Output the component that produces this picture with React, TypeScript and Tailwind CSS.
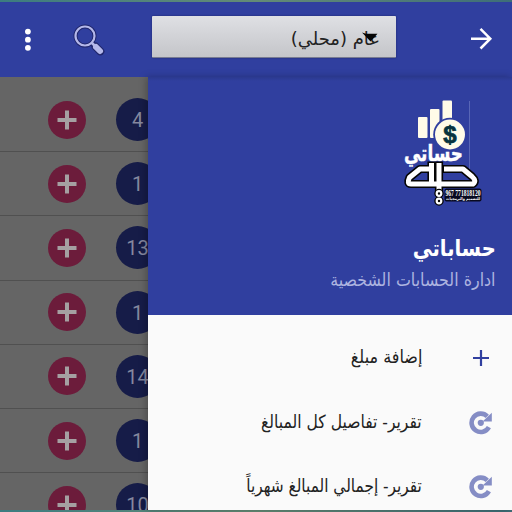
import React from "react";

const counts = ["4", "1", "13", "1", "14", "1", "10"];

const arabic = "font-['DejaVu_Sans',sans-serif]";

function SearchIcon() {
  return (
    <svg width="34" height="34" viewBox="0 0 34 34" fill="none">
      <g stroke="#20266b" strokeLinecap="round">
        <circle cx="13" cy="14" r="9.500" strokeWidth="4" />
        <path d="M20 21l2.500 2.500" strokeWidth="4.500" />
        <path d="M23.500 24.500l4.800 4.800" strokeWidth="8" />
      </g>
      <g stroke="#b4b8ea" strokeLinecap="round">
        <circle cx="13" cy="14" r="9.500" strokeWidth="2.200" />
        <path d="M20 21l2.500 2.500" strokeWidth="2.600" />
        <path d="M24 25l4 4" strokeWidth="6" />
      </g>
    </svg>
  );
}

function Header() {
  return (
    <header className="flex h-[75px] shrink-0 items-start bg-[#303f9f]">
      <svg className="ml-[24px] mt-[25px]" width="8" height="26" viewBox="0 0 8 26" fill="#fff">
        <circle cx="3.900" cy="4.600" r="2.900" />
        <circle cx="3.900" cy="12.700" r="2.900" />
        <circle cx="3.900" cy="20.800" r="2.900" />
      </svg>
      <div className="ml-[40px] mt-[20px]">
        <SearchIcon />
      </div>
      <div className="relative ml-[46px] mt-[14px] h-[42px] w-[244px] rounded-[1px] border-b border-[#777b91] bg-linear-to-b from-[#dfe0e4] to-[#c4c5c9] shadow-[0_0_2px_#1b2464]">
        <span
          dir="rtl"
          className={`absolute right-[16px] top-[9px] origin-right whitespace-nowrap text-[18px] leading-[28px] text-[#222] ${arabic}`}
        >
          عام (محلي)
        </span>
        <svg className="absolute left-[209px] top-[16px]" width="18" height="12" viewBox="0 0 18 12">
          <path d="M1 0.500l4 1.200h11.500L9.500 9.500z" fill="#050505" />
        </svg>
      </div>
      <svg className="ml-[74px] mt-[25px]" width="24" height="24" viewBox="0 0 24 24" fill="none" stroke="#fff" strokeWidth="2.500">
        <path d="M1 11.700h19M10.500 1.800L20.300 11.700 10.500 21.500" />
      </svg>
    </header>
  );
}

function AccountList() {
  return (
    <section className="h-full w-[148px] shrink-0 overflow-hidden bg-[#656565] pt-[11px]">
      {counts.map((count, i) => (
        <div key={i} className="flex h-[64.200px] w-[170px] items-center border-b border-[#505050] pl-[48px]">
          <div className="flex size-[38px] items-center justify-center rounded-full bg-[#6c1c3b]">
            <svg width="20" height="20" viewBox="0 0 20 20" stroke="#a5a0a2" strokeWidth="4">
              <path d="M0.500 10h19M10 0.500v19" />
            </svg>
          </div>
          <div className="ml-[30px] flex size-[43px] shrink-0 items-center justify-center rounded-full bg-[#161c48] pt-px font-[Roboto,sans-serif] text-[20px] text-[#85889f]">
            {count}
          </div>
        </div>
      ))}
    </section>
  );
}

const strokes =
  "M37 79H30L19.500 87.500Q16.500 94 21 94H83Q87 91 82 86.500L73 79H56.500M41.500 75.500v17M49 75.500v22";

function Logo() {
  return (
    <svg width="100" height="120" viewBox="0 0 100 120" direction="ltr">
      <path d="M79.500 11v68" stroke="#5866b6" strokeWidth="1" />
      <g fill="#fffbe8">
        <rect x="28" y="27" width="9.500" height="21" rx="1" />
        <rect x="40" y="19" width="9.500" height="29" rx="1" />
        <rect x="52.500" y="10.500" width="9.500" height="25" rx="1" />
      </g>
      <circle cx="60" cy="44.500" r="16.800" fill="#303f9f" />
      <circle cx="60" cy="44.500" r="15" fill="#fffbe8" />
      <text x="60" y="53" textAnchor="middle" fontFamily="Liberation Sans, sans-serif" fontWeight="700" fontSize="24" fill="#06333f" stroke="#06333f" strokeWidth=".7">$</text>
      <text x="43.500" y="70.500" textAnchor="middle" direction="rtl" textLength="59" lengthAdjust="spacingAndGlyphs" fontFamily="DejaVu Sans, sans-serif" fontWeight="700" fontSize="23" fill="#fff" stroke="#fff" strokeWidth=".4">حساتي</text>
      <g fill="none" strokeLinejoin="round" strokeLinecap="square">
        <path d={strokes} stroke="#050505" strokeWidth="8.200" />
        <path d={strokes} stroke="#fff" strokeWidth="5" />
      </g>
      <g fill="#050505" stroke="#050505" strokeWidth="6.500">
        <circle cx="49" cy="103.500" r="1.500" />
        <circle cx="49" cy="111" r="1.500" />
      </g>
      <g fill="#050505" stroke="#fff" strokeWidth="2.200">
        <circle cx="49" cy="103.500" r="2.300" />
        <circle cx="49" cy="111" r="2.300" />
      </g>
      <rect x="54.500" y="98.500" width="37" height="13" rx="2" fill="#080a20" />
      <text x="55.500" y="105.500" textLength="35" lengthAdjust="spacingAndGlyphs" fontFamily="Liberation Serif, serif" fontWeight="700" fontSize="8" fill="#fff">967 771818120</text>
      <text x="90" y="110" direction="rtl" textLength="34" lengthAdjust="spacingAndGlyphs" fontFamily="DejaVu Sans, sans-serif" fontWeight="700" fontSize="4" fill="#fff">للتصميم والبرمجيات</text>
    </svg>
  );
}

function ReportIcon() {
  return (
    <svg width="24" height="24" viewBox="0 0 24 24">
      <path d="M19.900 16.200A9.200 9.200 0 1 1 18.300 5.300" fill="none" stroke="#858dc5" strokeWidth="4.600" />
      <path d="M22.800 1.800v8.600h-9.200z" fill="#858dc5" />
      <circle cx="11.800" cy="11.800" r="3.100" fill="#858dc5" />
    </svg>
  );
}

const menu = [
  { label: "إضافة مبلغ", add: true, fit: "scale-x-[0.89]" },
  { label: "تقرير- تفاصيل كل المبالغ", add: false, fit: "scale-x-[0.865]" },
  { label: "تقرير- إجمالي المبالغ شهرياً", add: false, fit: "scale-x-[0.853]" },
];

function Drawer() {
  return (
    <aside dir="rtl" className="relative h-full min-w-0 flex-1 overflow-hidden bg-[#fafafa] shadow-[-2px_0_7px_rgba(0,0,0,0.25)]">
      <div className="h-[238px] bg-[#303f9f] bg-linear-to-b from-[#2b398f] to-[#303f9f] to-[4px] pr-4 pt-[13px]">
        <div className="mr-[6px] h-[120px] w-[100px]">
          <Logo />
        </div>
        <h1 className={`mt-[23px] text-[23px] font-bold leading-[30px] text-white ${arabic}`}>
          <span className="inline-block origin-right scale-x-[0.85] whitespace-nowrap">حساباتي</span>
        </h1>
        <p className={`mt-[3px] text-[18px] leading-[28px] text-[#adb4e0] ${arabic}`}>
          <span className="inline-block origin-right scale-x-[0.882] whitespace-nowrap">ادارة الحسابات الشخصية</span>
        </p>
      </div>
      <nav className="pt-[11px]">
        {menu.map((item) => (
          <div key={item.label} className="flex h-[64.600px] items-center pr-[19px]">
            <div className="flex w-6 shrink-0 justify-center">
              {item.add ? (
                <svg width="18" height="18" viewBox="0 0 18 18" stroke="#303f9f" strokeWidth="2.200">
                  <path d="M1 9h16M9 1v16" />
                </svg>
              ) : (
                <ReportIcon />
              )}
            </div>
            <span className={`mb-[2px] mr-[47px] inline-block origin-right whitespace-nowrap text-[18px] leading-[28px] text-[#222] ${item.fit} ${arabic}`}>
              {item.label}
            </span>
          </div>
        ))}
      </nav>
    </aside>
  );
}

export default function App() {
  return (
    <div className="flex h-[512px] w-[512px] flex-col overflow-hidden bg-[#303f9f]">
      <div className="h-[2px] shrink-0 bg-linear-to-r from-[#3c7c80] via-[#648b76] to-[#3e6e78]" />
      <Header />
      <main className="flex h-[433px] shrink-0">
        <AccountList />
        <Drawer />
      </main>
      <div className="h-[2px] shrink-0 bg-linear-to-r from-[#3c7c80] via-[#648b76] to-[#3e6e78]" />
    </div>
  );
}
